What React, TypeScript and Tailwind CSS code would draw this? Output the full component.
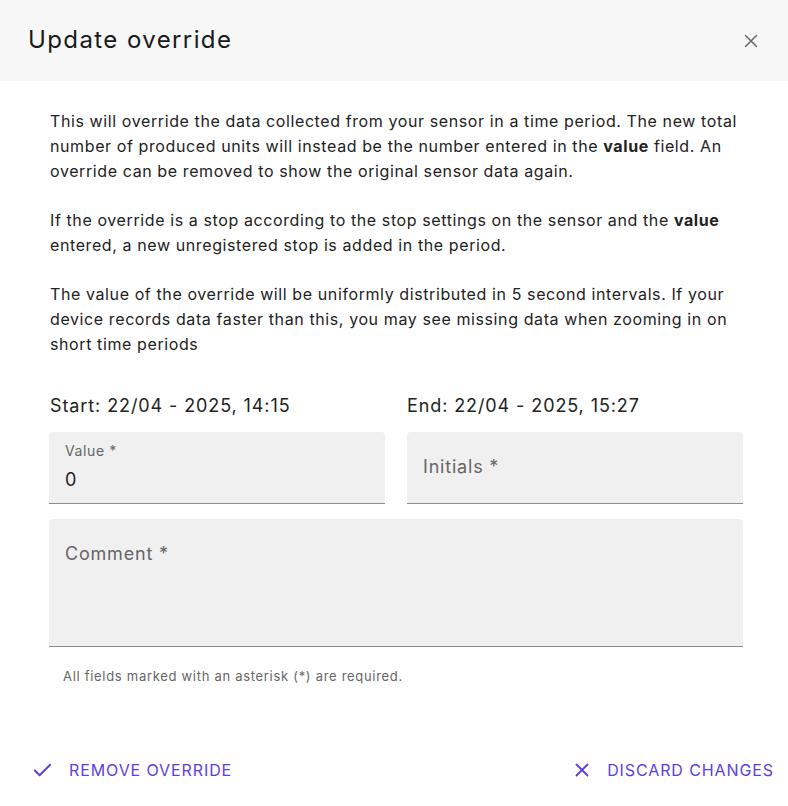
import { Check, X } from 'lucide-react';

function FilledField({ label, value, className }: { label: string; value?: string; className?: string }) {
  return (
    <div className={`relative rounded-t-[4px] bg-[#f0f0f0] border-b border-[#8c8c8c] ${className ?? ''}`}>
      {value !== undefined ? (
        <div className="px-4 pt-[10px]">
          <div className="text-[14px] leading-[18px] tracking-[0.6px] text-[#666]">{label}</div>
          <div className="text-[18px] leading-[28px] text-[#222] mt-[6px]">{value}</div>
        </div>
      ) : (
        <div className="px-4 pt-[22px] text-[18px] leading-[26px] tracking-[0.8px] text-[#666]">{label}</div>
      )}
    </div>
  );
}

export default function App() {
  return (
    <div className="w-[788px] h-[806px] bg-white flex flex-col font-['Inter',sans-serif] text-[#222]">
      {/* Header */}
      <div className="h-[81px] bg-[#f7f7f7] flex items-center justify-between pl-[28px] pr-[26px]">
        <h2 className="text-[24px] leading-none font-normal tracking-[1.4px] text-[#1a1a1a] -mt-[1px]">Update override</h2>
        <X className="w-[22px] h-[22px] text-[#666]" strokeWidth={1.6} />
      </div>

      {/* Body */}
      <div className="pl-[49px] pr-[45px] pt-[28px] flex flex-col">
        <div className="text-[16px] leading-[25px] tracking-[0.6px] pl-[1px]">
          <p>
            This will override the data collected from your sensor in a time period. The new total number of
            produced units will instead be the number entered in the <b className="font-bold">value</b> field. An
            override can be removed to show the original sensor data again.
          </p>
          <p className="mt-[24px]">
            If the override is a stop according to the stop settings on the sensor and the{' '}
            <b className="font-bold">value</b> entered, a new unregistered stop is added in the period.
          </p>
          <p className="mt-[24px]">
            The value of the override will be uniformly distributed in 5 second intervals. If your device records
            data faster than this, you may see missing data when zooming in on short time periods
          </p>
        </div>

        <div className="grid grid-cols-2 gap-x-[22px] mt-[35px] text-[18px] leading-[27px] tracking-[0.9px]">
          <div className="pl-[1px]">Start: 22/04 - 2025, 14:15</div>
          <div>End: 22/04 - 2025, 15:27</div>
        </div>

        <div className="grid grid-cols-2 gap-x-[22px] mt-[13px]">
          <FilledField label="Value *" value="0" className="h-[72px]" />
          <FilledField label="Initials *" className="h-[72px]" />
        </div>

        <FilledField label="Comment *" className="h-[128px] mt-[15px]" />

        <div className="text-[13px] leading-[18px] tracking-[0.7px] text-[#666] mt-[20px] pl-[14px]">
          All fields marked with an asterisk (*) are required.
        </div>
      </div>

      {/* Actions */}
      <div className="mt-auto h-[72px] flex items-center justify-between pl-[31px] pr-[14px]">
        <button className="flex items-center gap-[15px] text-[#5b3fe4] text-[16px] leading-[24px] tracking-[0.9px] uppercase">
          <Check className="w-[23px] h-[23px]" strokeWidth={2} />
          <span>Remove override</span>
        </button>
        <button className="flex items-center gap-[14px] text-[#5b3fe4] text-[16px] leading-[24px] tracking-[0.9px] uppercase">
          <X className="w-[22px] h-[22px]" strokeWidth={2} />
          <span>Discard changes</span>
        </button>
      </div>
    </div>
  );
}
